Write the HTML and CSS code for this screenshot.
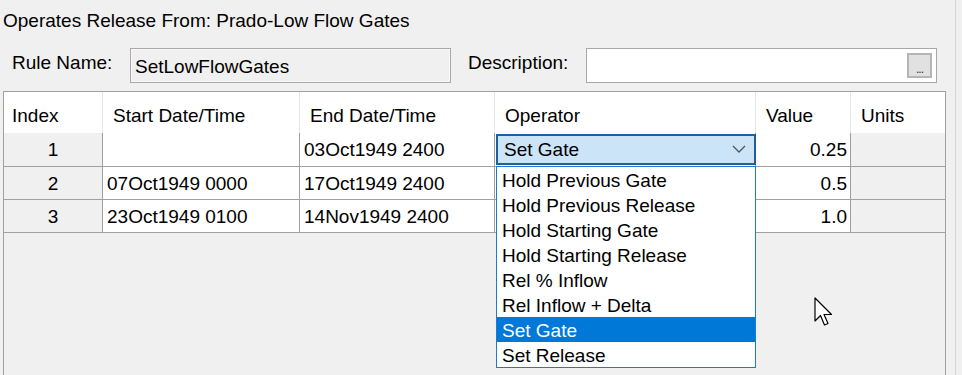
FILE: index.html
```html
<!DOCTYPE html>
<html lang="en">
<head>
  <meta charset="UTF-8">
  <title>Operates Release From</title>
  <link rel="stylesheet" href="styles.css">
</head>
<body>
  <div id="wrap">
    <div class="title">Operates Release From: Prado-Low Flow Gates</div>
    <div class="ruleRow">
      <span class="lbl lblRule">Rule Name:</span>
      <div class="txt txtRule">SetLowFlowGates</div>
      <span class="lbl lblDesc">Description:</span>
      <div class="txt txtDesc">
        <div class="dots">...</div>
      </div>
    </div>
    <div class="pane">
      <div class="row head">
        <div class="c c1">Index</div>
        <div class="c c2">Start Date/Time</div>
        <div class="c c3">End Date/Time</div>
        <div class="c c4">Operator</div>
        <div class="c c5">Value</div>
        <div class="c c6">Units</div>
      </div>
      <div class="row r1">
        <div class="c c1 idx">1</div>
        <div class="c c2"></div>
        <div class="c c3">03Oct1949 2400</div>
        <div class="c c4 op">
          <div class="combo">
            <span>Set Gate</span>
            <svg width="14" height="8" viewBox="0 0 14 8"><polyline points="1,1 7,7 13,1" fill="none" stroke="#555" stroke-width="1.3"/></svg>
          </div>
          <div class="list">
            <div class="item">Hold Previous Gate</div>
            <div class="item">Hold Previous Release</div>
            <div class="item">Hold Starting Gate</div>
            <div class="item">Hold Starting Release</div>
            <div class="item">Rel % Inflow</div>
            <div class="item">Rel Inflow + Delta</div>
            <div class="item sel">Set Gate</div>
            <div class="item">Set Release</div>
          </div>
        </div>
        <div class="c c5 num">0.25</div>
        <div class="c c6 gray"></div>
      </div>
      <div class="row">
        <div class="c c1 idx">2</div>
        <div class="c c2">07Oct1949 0000</div>
        <div class="c c3">17Oct1949 2400</div>
        <div class="c c4"></div>
        <div class="c c5 num">0.5</div>
        <div class="c c6 gray"></div>
      </div>
      <div class="row">
        <div class="c c1 idx">3</div>
        <div class="c c2">23Oct1949 0100</div>
        <div class="c c3">14Nov1949 2400</div>
        <div class="c c4"></div>
        <div class="c c5 num">1.0</div>
        <div class="c c6 gray"></div>
      </div>
    </div>
    <!-- mouse pointer -->
    <svg class="cursor" width="20" height="31" viewBox="0 0 20 31">
      <path d="M1,1 L1,24 L6.5,18.5 L10.5,28 L14,26.5 L10,17.5 L17.5,17.5 Z" fill="#fff" stroke="#000" stroke-width="1.2" stroke-linejoin="round"/>
    </svg>
  </div>
</body>
</html>
```

FILE: styles.css
```css
* { margin: 0; padding: 0; box-sizing: border-box; }
body {
  width: 962px;
  height: 375px;
  overflow: hidden;
  background: #f0f0f0;
  font-family: "Liberation Sans", Arial, sans-serif;
  font-size: 19px;
  color: #000;
}
#wrap {
  position: relative;
  width: 956px;
  height: 375px;
  border-right: 1px solid #d6d6d6;
}
.title {
  padding: 10px 0 0 3px;
  height: 48px;
  line-height: 22px;
}
.ruleRow {
  display: flex;
  align-items: center;
  height: 35px;
}
.lbl {
  line-height: 22px;
  margin-top: -6px;
}
.lblRule {
  margin-left: 12px;
  width: 118px;
}
.lblDesc {
  margin-left: 17px;
  width: 118px;
}
.txt {
  height: 35px;
  border: 1px solid #a8a8a8;
  line-height: 35px;
  padding-left: 4px;
}
.txtRule {
  width: 321px;
  background: #f0f0f0;
  box-shadow: inset 0 0 0 1px #f8f8f8;
}
.txtDesc {
  width: 351px;
  background: #fff;
  display: flex;
  justify-content: flex-end;
  align-items: center;
  padding-right: 4px;
}
.dots {
  width: 25px;
  height: 25px;
  background: #e1e1e1;
  border: 2px solid #b5b5b5;
  font-size: 12px;
  line-height: 28px;
  text-align: center;
  color: #333;
  letter-spacing: -1px;
}
.pane {
  margin: 8px 0 0 3px;
  width: 943px;
  height: 300px;
  border: 1px solid #a0a0a0;
  border-bottom: none;
}
.row {
  display: flex;
  height: 33px;
  border-bottom: 1px solid #a0a0a0;
}
.row.r1 {
  height: 34px;
}
.row.head {
  height: 41px;
  border-bottom: none;
  background: #fff;
}
.c {
  border-right: 1px solid #a0a0a0;
  padding-left: 4px;
  line-height: 34px;
  white-space: nowrap;
  background: #fff;
}
.head .c {
  border-right: 1px solid #e6e6e6;
  line-height: 48px;
  padding-left: 10px;
}
.head .c1 { padding-left: 8px; }
.c1 { width: 99px; }
.c2 { width: 197px; }
.c3 { width: 195px; }
.c4 { width: 261px; }
.c5 { width: 95px; }
.c6 { width: 94px; border-right: none; }
.head .c6 { border-right: none; }
.idx {
  background: #f0f0f0;
  text-align: center;
  padding-left: 0;
}
.gray { background: #f0f0f0; }
.num {
  text-align: right;
  padding-right: 3px;
}
.op {
  position: relative;
}
.combo {
  position: absolute;
  left: 1px;
  top: 1px;
  width: 260px;
  height: 31px;
  background: #cce4f7;
  border: 2px solid #1f5f9f;
  display: flex;
  align-items: center;
  justify-content: space-between;
  padding: 0 8px 0 6px;
  line-height: 28px;
  z-index: 2;
}
.combo svg { margin-top: -2px; }
.list {
  position: absolute;
  left: 1px;
  top: 33px;
  width: 260px;
  background: #fff;
  border: 1px solid #1a7ad4;
  z-index: 3;
}
.item {
  height: 25px;
  line-height: 27px;
  padding-left: 5px;
}
.item.sel {
  background: #0078d7;
  color: #fff;
}
.cursor {
  position: absolute;
  left: 814px;
  top: 297px;
}
```
